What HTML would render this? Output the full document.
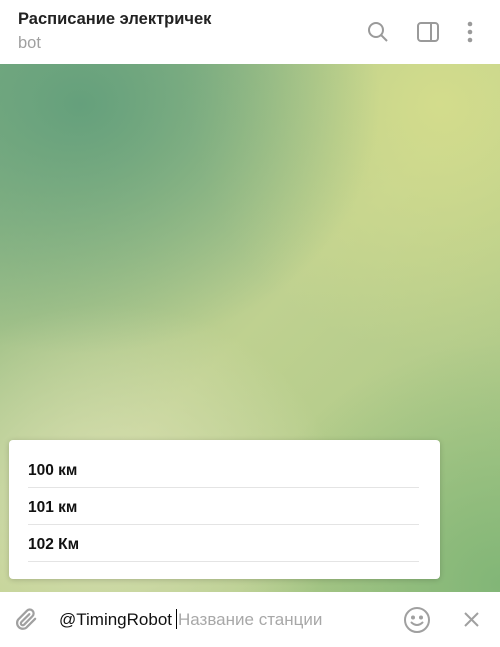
<!DOCTYPE html>
<html><head><meta charset="utf-8"><style>
*{margin:0;padding:0;box-sizing:border-box}
body{width:500px;height:647px;overflow:hidden;font-family:"Liberation Sans",sans-serif;background:#fff;position:relative}
.hdr{position:absolute;left:0;top:0;width:500px;height:64px;background:#fff}
.t1{position:absolute;left:18px;top:10px;font-size:16.5px;font-weight:bold;color:#222}
.t2{position:absolute;left:18px;top:34px;font-size:16.5px;color:#a0a0a0}
.bg{position:absolute;left:0;top:64px;width:500px;height:528px;
background:
radial-gradient(ellipse 300px 250px at 80px 40px,#65a07c 0%,rgba(101,160,124,0) 100%),
radial-gradient(ellipse 250px 250px at 440px 40px,#d3dc8c 0%,rgba(211,220,140,0) 100%),
radial-gradient(ellipse 230px 200px at 110px 440px,#d8dfb3 0%,rgba(216,223,179,0) 100%),
radial-gradient(ellipse 260px 240px at 500px 520px,#82b677 0%,rgba(130,182,119,0) 100%),
linear-gradient(135deg,#85b283 0%,#bfd190 50%,#a7c685 100%)}
.pop{position:absolute;left:9px;top:440px;width:431px;height:139px;background:#fff;border-radius:4px;box-shadow:0 1px 6px rgba(0,0,0,.18)}
.it{position:absolute;left:19px;width:391px;height:37px;border-bottom:1px solid #e4e4e4;font-size:15.5px;font-weight:bold;color:#111;padding-top:11px}
.inp{position:absolute;left:0;top:592px;width:500px;height:55px;background:#fff}
</style></head><body>
<div class="hdr">
<div class="t1">Расписание электричек</div>
<div class="t2">bot</div>
<svg style="position:absolute;left:366px;top:20px" width="24" height="24" viewBox="0 0 24 24" fill="none" stroke="#9a9a9a" stroke-width="2"><circle cx="10" cy="10" r="7"/><path d="M15 15l6 6"/></svg>
<svg style="position:absolute;left:416px;top:20px" width="24" height="24" viewBox="0 0 24 24" fill="none" stroke="#9a9a9a" stroke-width="2"><rect x="2" y="3" width="20" height="18" rx="3"/><path d="M15 3v18"/></svg>
<svg style="position:absolute;left:466px;top:20px" width="8" height="24" viewBox="0 0 8 24" fill="#9a9a9a"><circle cx="4" cy="4" r="2.3"/><circle cx="4" cy="12" r="2.3"/><circle cx="4" cy="20" r="2.3"/></svg>
</div>
<div class="bg"></div>
<div class="pop">
<div class="it" style="top:11px">100 км</div>
<div class="it" style="top:48px">101 км</div>
<div class="it" style="top:85px">102 Км</div>
</div>
<div class="inp">
<svg style="position:absolute;left:13px;top:14px" width="28" height="28" viewBox="0 0 24 24" fill="none" stroke="#a0a0a0" stroke-width="1.9" stroke-linecap="round"><path d="M19 11l-7.5 7.5a5 5 0 0 1-7-7L12 4a3.3 3.3 0 0 1 4.7 4.7L9.5 16a1.6 1.6 0 0 1-2.3-2.3L14 7"/></svg>
<div style="position:absolute;left:59px;top:17px;font-size:17px;color:#111">@TimingRobot<span style="display:inline-block;width:1px;height:20px;background:#000;vertical-align:-4px;margin:0 1px 0 4px"></span><span style="color:#a8a8a8">Название станции</span></div>
<svg style="position:absolute;left:403px;top:14px" width="28" height="28" viewBox="0 0 28 28" fill="none" stroke="#a0a0a0" stroke-width="2"><circle cx="14" cy="14" r="12"/><circle cx="10" cy="11.5" r="1" fill="#a0a0a0"/><circle cx="18" cy="11.5" r="1" fill="#a0a0a0"/><path d="M8.5 16.5q5.5 5 11 0" stroke-linecap="round"/></svg>
<svg style="position:absolute;left:464px;top:20px" width="15" height="15" viewBox="0 0 15 15" stroke="#a0a0a0" stroke-width="2"><path d="M1 1l13 13M14 1L1 14"/></svg>
</div>
</body></html>
